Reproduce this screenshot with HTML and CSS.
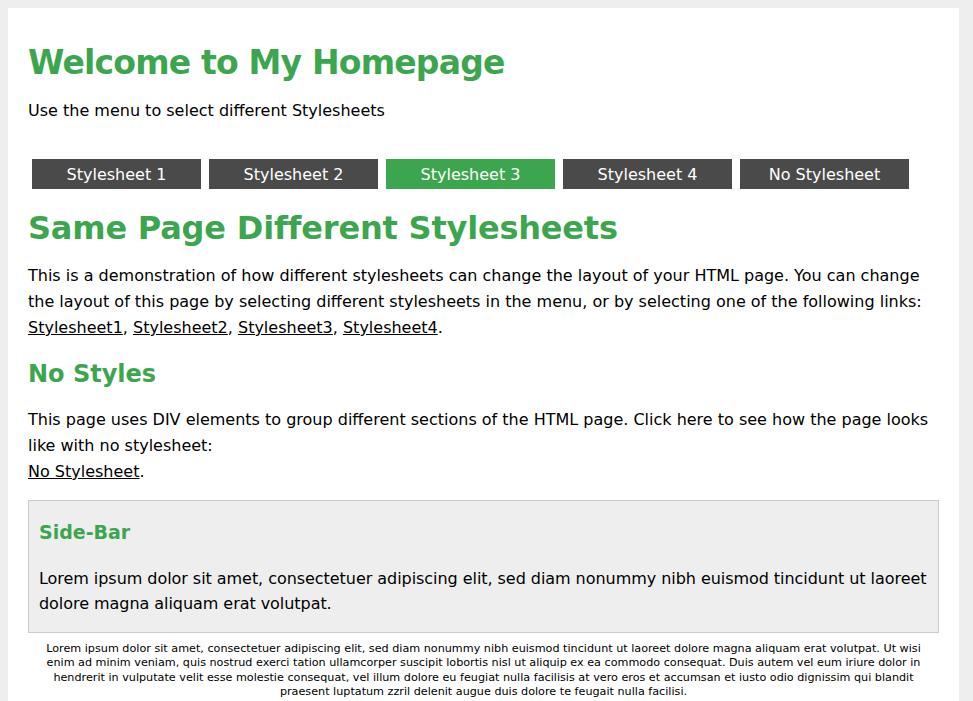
FILE: index.html
```html
<!DOCTYPE html>
<html lang="en">
<head>
<meta charset="utf-8">
<title>Welcome to My Homepage</title>
<link rel="stylesheet" href="styles.css">
</head>
<body>
<div class="page">
  <h1 class="title">Welcome to My Homepage</h1>
  <p class="intro">Use the menu to select different Stylesheets</p>
  <nav class="menu">
    <a class="menu-item" href="#">Stylesheet 1</a>
    <a class="menu-item" href="#">Stylesheet 2</a>
    <a class="menu-item active" href="#">Stylesheet 3</a>
    <a class="menu-item" href="#">Stylesheet 4</a>
    <a class="menu-item" href="#">No Stylesheet</a>
  </nav>
  <h2 class="heading">Same Page Different Stylesheets</h2>
  <p class="text">This is a demonstration of how different stylesheets can change the layout of your HTML page. You can change the layout of this page by selecting different stylesheets in the menu, or by selecting one of the following links:<br><a href="#">Stylesheet1</a>, <a href="#">Stylesheet2</a>, <a href="#">Stylesheet3</a>, <a href="#">Stylesheet4</a>.</p>
  <h3 class="subheading">No Styles</h3>
  <p class="text">This page uses DIV elements to group different sections of the HTML page. Click here to see how the page looks like with no stylesheet:<br><a href="#">No Stylesheet</a>.</p>
  <div class="sidebar">
    <h4 class="sidebar-title">Side-Bar</h4>
    <p class="sidebar-text">Lorem ipsum dolor sit amet, consectetuer adipiscing elit, sed diam nonummy nibh euismod tincidunt ut laoreet dolore magna aliquam erat volutpat.</p>
  </div>
  <p class="footer">Lorem ipsum dolor sit amet, consectetuer adipiscing elit, sed diam nonummy nibh euismod tincidunt ut laoreet dolore magna aliquam erat volutpat. Ut wisi<br>enim ad minim veniam, quis nostrud exerci tation ullamcorper suscipit lobortis nisl ut aliquip ex ea commodo consequat. Duis autem vel eum iriure dolor in<br>hendrerit in vulputate velit esse molestie consequat, vel illum dolore eu feugiat nulla facilisis at vero eros et accumsan et iusto odio dignissim qui blandit<br>praesent luptatum zzril delenit augue duis dolore te feugait nulla facilisi.</p>
</div>
</body>
</html>
```
FILE: styles.css
```css
html, body {
  margin: 0;
  padding: 0;
}
body {
  background: #eeeeee;
  font-family: "DejaVu Sans", Verdana, sans-serif;
  color: #000;
  padding: 8px 14px 0 8px;
}
.page {
  background: #ffffff;
  padding: 14px 20px 10px 20px;
}
.title {
  color: #3ba64e;
  font-size: 33px;
  letter-spacing: -0.8px;
  line-height: 42px;
  margin: 20px 0 14px 0;
}
.intro {
  font-size: 16px;
  line-height: 26px;
  margin: 0 0 35px 0;
}
.menu {
  display: flex;
  gap: 8px;
  padding: 0 4px;
}
.menu-item {
  box-sizing: border-box;
  width: 169px;
  height: 30px;
  padding-top: 1px;
  line-height: 29px;
  background: #4a4a4a;
  color: #ffffff;
  text-align: center;
  font-size: 16px;
  text-decoration: none;
}
.menu-item.active {
  background: #3ba64e;
}
.heading {
  color: #3ba64e;
  font-size: 32px;
  letter-spacing: -0.2px;
  line-height: 38px;
  margin: 20px 0 16px 0;
}
.subheading {
  color: #3ba64e;
  font-size: 24px;
  line-height: 31px;
  margin: 18px 0 17px 0;
}
.text {
  font-size: 16px;
  line-height: 26px;
  margin: 0;
}
.text a {
  color: #000;
}
.sidebar {
  margin-top: 15px;
  background: #eeeeee;
  border: 1px solid #cccccc;
  padding: 19px 0 16px 10px;
}
.sidebar-title {
  color: #3ba64e;
  font-size: 19px;
  line-height: 24px;
  margin: 0 0 22px 0;
}
.sidebar-text {
  font-size: 16px;
  letter-spacing: -0.05px;
  line-height: 25px;
  margin: 0;
}
.footer {
  font-size: 11.2px;
  line-height: 14.33px;
  text-align: center;
  margin: 9px 0 0 0;
}
```
